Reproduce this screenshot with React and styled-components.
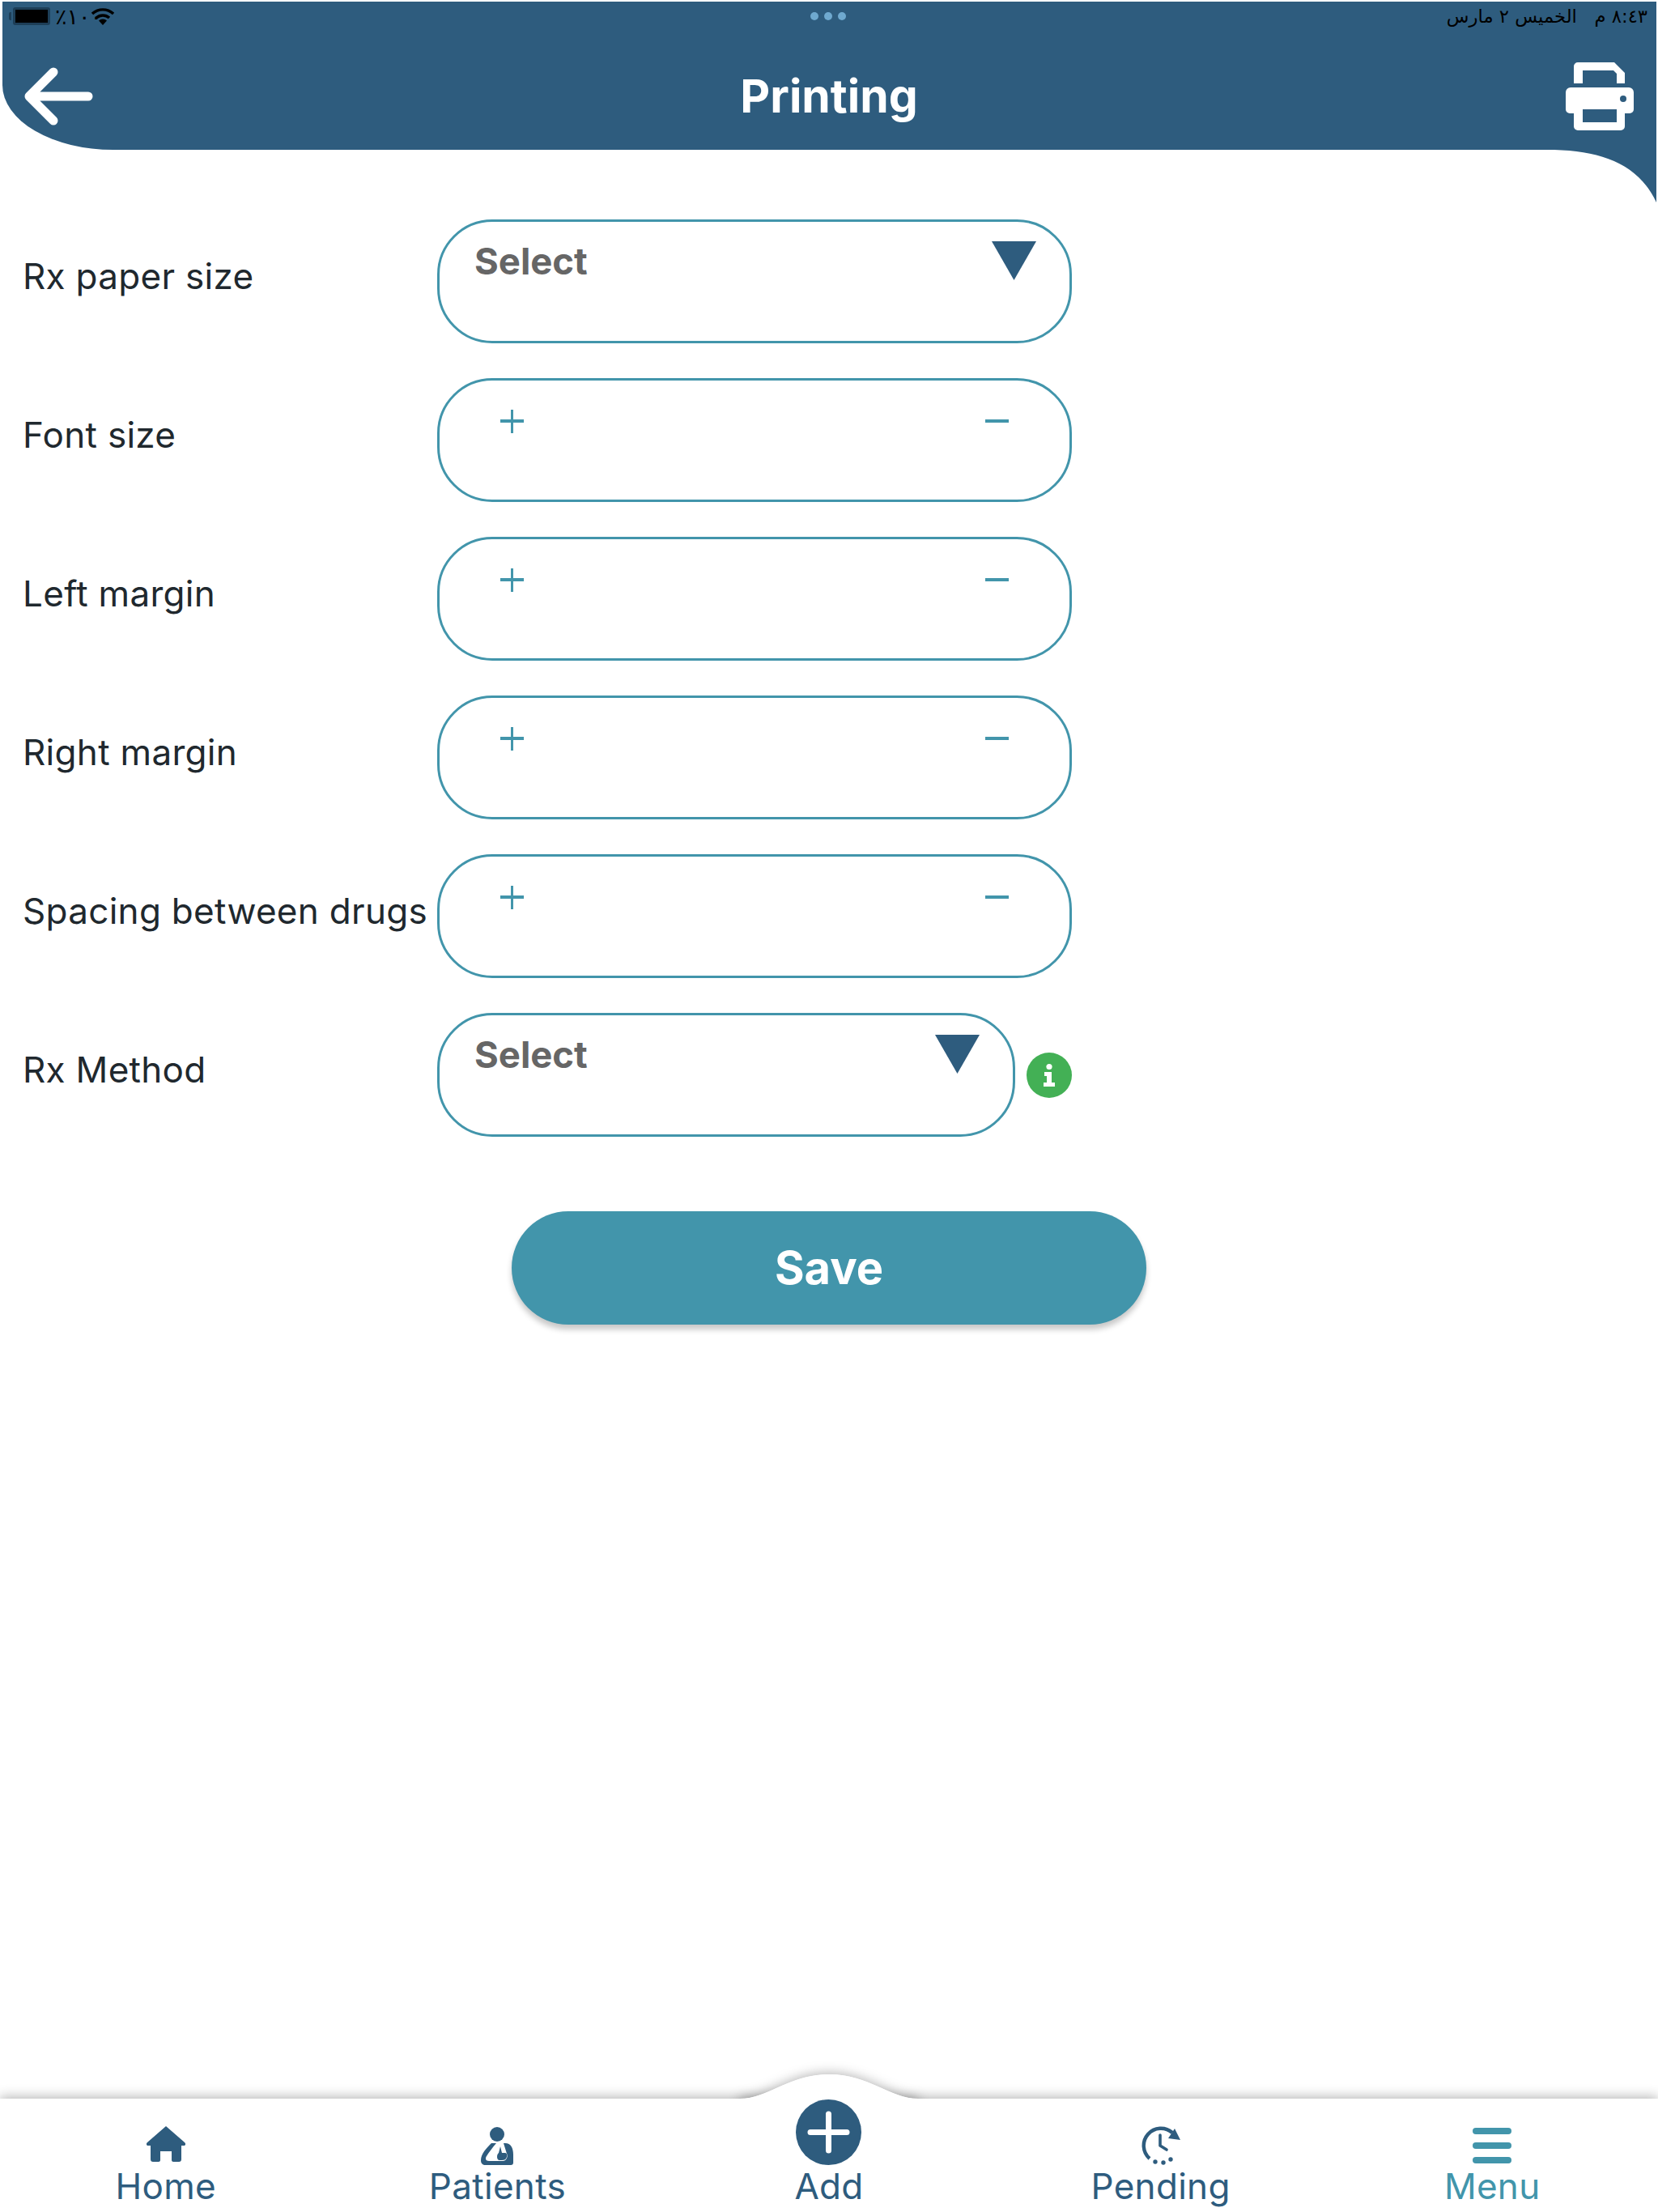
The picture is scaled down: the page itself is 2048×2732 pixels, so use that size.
import React from "react";
import styled, { createGlobalStyle } from "styled-components";

const navy = "#2e5c7e";
const teal = "#4295ab";

const rows = [
  { label: "Rx paper size", kind: "select" },
  { label: "Font size", kind: "stepper" },
  { label: "Left margin", kind: "stepper" },
  { label: "Right margin", kind: "stepper" },
  { label: "Spacing between drugs", kind: "stepper" },
  { label: "Rx Method", kind: "select", info: true },
];

const GlobalStyle = createGlobalStyle`
  html, body { margin: 0; padding: 0; background: #fff; }
  body { font-family: Inter, "Liberation Sans", sans-serif; }
`;

const Page = styled.div`
  width: 2048px;
  height: 2732px;
  display: flex;
  flex-direction: column;
  overflow: hidden;
  background: #fff;
`;

const Header = styled.header`
  position: relative;
  margin: 2px 2px 0 3px;
  height: 183px;
  background: ${navy};
  border-bottom-left-radius: 137px 80px;
  flex-shrink: 0;
`;

const StatusBar = styled.div`
  height: 36px;
  display: grid;
  grid-template-columns: 1fr auto 1fr;
  align-items: center;
  padding: 0 11px 0 7px;
  color: #000;
`;

const StatusLeft = styled.div`
  display: flex;
  align-items: center;
`;

const Battery = styled.div`
  position: relative;
  width: 40px;
  height: 16px;
  margin-left: 6px;
  background: #000;
  border-radius: 3px;
  border: 3px solid #1d3e57;
  &::before {
    content: "";
    position: absolute;
    left: -8px;
    top: 3px;
    width: 3px;
    height: 10px;
    background: #1d3e57;
    border-radius: 2px 0 0 2px;
  }
`;

const Percent = styled.span`
  font: 27px "DejaVu Sans", sans-serif;
  margin-left: 6px;
  width: 36px;
  white-space: nowrap;
`;

const Dots = styled.div`
  display: flex;
  gap: 7px;
`;

const Dot = styled.span`
  width: 10px;
  height: 10px;
  border-radius: 50%;
  background: #6fa9cf;
`;

const StatusTime = styled.div`
  direction: rtl;
  text-align: left;
  justify-self: end;
  font: 22.7px "DejaVu Sans", sans-serif;
  white-space: pre;
`;

const NavBar = styled.div`
  display: flex;
  align-items: center;
  justify-content: space-between;
  height: 133px;
  padding: 14px 28px 0 25px;
`;

const Title = styled.h1`
  margin: 0 0 0 -4px;
  font-size: 57px;
  font-weight: 700;
  color: #fff;
`;

const HeaderCorner = styled.svg`
  position: absolute;
  right: 0;
  top: 100%;
  display: block;
`;

const Form = styled.main`
  display: flex;
  flex-direction: column;
  gap: 43px;
  padding: 86px 0 0 28px;
`;

const Row = styled.div`
  display: flex;
  align-items: center;
`;

const Label = styled.label`
  width: 512px;
  padding-bottom: 14px;
  font-size: 44px;
  letter-spacing: 0.3px;
  color: #20282e;
  white-space: nowrap;
`;

const Field = styled.div`
  box-sizing: border-box;
  width: ${(p) => p.$width}px;
  height: 153px;
  display: flex;
  align-items: flex-start;
  justify-content: space-between;
  border: 3px solid ${teal};
  border-radius: 68px;
  background: #fff;
`;

const SelectField = styled(Field)`
  padding: 24px 41px 0 43px;
`;

const SelectText = styled.span`
  font-size: 45.5px;
  font-weight: 700;
  line-height: 50px;
  color: #666;
`;

const Caret = styled.span`
  width: 55px;
  height: 48px;
  background: ${navy};
  clip-path: polygon(0 0, 100% 0, 50% 100%);
`;

const StepperField = styled(Field)`
  padding: 36px 75px 0 75px;
`;

const StepButton = styled.span`
  position: relative;
  display: block;
  width: 29px;
  height: 29px;
  &::before {
    content: "";
    position: absolute;
    left: 0;
    right: 0;
    top: 12px;
    height: 4px;
    background: ${teal};
  }
  &::after {
    content: "";
    display: ${(p) => (p.$plus ? "block" : "none")};
    position: absolute;
    top: 0;
    bottom: 0;
    left: 13px;
    width: 3px;
    background: ${teal};
  }
`;

const InfoIcon = styled.svg`
  display: block;
  margin-left: 14px;
`;

const SaveButton = styled.button`
  align-self: flex-start;
  width: 784px;
  height: 140px;
  margin: 49px 0 0 604px;
  border: 0;
  border-radius: 70px;
  background: ${teal};
  box-shadow: 0 6px 7px rgba(0, 0, 0, 0.22);
  color: #fff;
  font-family: inherit;
  font-size: 56px;
  font-weight: 700;
  padding: 0;
`;

const TabBar = styled.nav`
  position: relative;
  margin-top: auto;
  height: 140px;
  display: grid;
  grid-template-columns: repeat(5, 1fr);
  background: #fff;
  box-shadow: 0 -2px 14px rgba(0, 0, 0, 0.3);
`;

const Hump = styled.svg`
  position: absolute;
  left: 50%;
  top: -30px;
  margin-left: -110px;
  display: block;
  filter: drop-shadow(0 -2px 7px rgba(0, 0, 0, 0.28));
  clip-path: inset(-30px -30px 30px -30px);
`;

const HumpFill = styled.svg`
  position: absolute;
  left: 50%;
  top: -30px;
  margin-left: -110px;
  display: block;
`;

const Tab = styled.div`
  position: relative;
  display: flex;
  flex-direction: column;
  align-items: center;
  color: ${(p) => (p.$active ? teal : navy)};
`;

const IconSlot = styled.div`
  height: 82px;
  display: flex;
  align-items: flex-end;
`;

const TabLabel = styled.span`
  font-size: 44px;
  line-height: 52px;
  letter-spacing: 0.3px;
`;

const MenuBars = styled.div`
  display: flex;
  flex-direction: column;
  gap: 10px;
  width: 48px;
  margin-bottom: 2px;
`;

const MenuBar = styled.span`
  height: 8px;
  border-radius: 4px;
  background: ${teal};
`;

const humpPath = "M0 30C35 30 60 0 110 0S185 30 220 30V60H0Z";

function BackArrow() {
  return (
    <svg width="90" height="76" viewBox="0 0 90 76" fill="none" stroke="#fff" strokeWidth="11" strokeLinecap="round" strokeLinejoin="round">
      <path d="M8 38H81M38 8 8 38l30 30" />
    </svg>
  );
}

function PrinterIcon() {
  return (
    <svg width="84" height="84" viewBox="0 0 84 84">
      <path fill="#fff" fillRule="evenodd" d="M15 0h45l13 13v13H63V14l-4-4H21v16H10V5a5 5 0 0 1 5-5Z" />
      <path fill="#fff" fillRule="evenodd" d="M6 31h72a6 6 0 0 1 6 6v21a5 5 0 0 1-5 5h-6v16a5 5 0 0 1-5 5H15a5 5 0 0 1-5-5V63H5a5 5 0 0 1-5-5V37a6 6 0 0 1 6-6Zm15 27v16h42V58Z" />
      <circle cx="71" cy="45" r="4" fill={navy} />
    </svg>
  );
}

function WifiIcon() {
  return (
    <svg width="28" height="21" viewBox="0 0 28 21" style={{ marginLeft: 9 }}>
      <path d="M1 7a19 19 0 0 1 26 0" fill="none" stroke="#000" strokeWidth="3.4" />
      <path d="M6 12a12 12 0 0 1 16 0" fill="none" stroke="#000" strokeWidth="3.4" />
      <path d="M9 15.5a7 7 0 0 1 10 0L14 21Z" fill="#000" />
    </svg>
  );
}

function InfoBadge() {
  return (
    <InfoIcon width="56" height="56" viewBox="0 0 56 56">
      <circle cx="28" cy="28" r="28" fill="#43b055" />
      <circle cx="28" cy="17.5" r="3.6" fill="#fff" />
      <path fill="#fff" d="M22 24h9v13h4v5H21v-5h4v-8h-3Z" />
    </InfoIcon>
  );
}

function HomeIcon() {
  return (
    <svg width="48" height="46" viewBox="0 0 48 46" style={{ marginBottom: 2 }}>
      <path fill={navy} d="M24 0 47 20c2 2 1 4-1 4h-3v17c0 2-1 3-3 3h-7c-1 0-2-1-2-2V31H17v11c0 1-1 2-2 2H8c-2 0-3-1-3-3V24H2c-2 0-3-2-1-4Z" />
    </svg>
  );
}

function PatientsIcon() {
  return (
    <svg width="40" height="47" viewBox="0 0 40 47">
      <circle cx="20" cy="9" r="9" fill={navy} />
      <path fill={navy} d="M13 20C7 26 0 33 0 41c0 4 2 6 6 6h31c2 0 3-1 3-3V34c0-8-3-14-10-14h-2l4 13c2 2 0 9-5 9H10c-4 0-5-3-3-6 3-5 7-10 12-16Z" />
      <path fill={navy} d="M24 24 26 32h3c3 0 4 2 3 5s-3 4-6 4h-3c-2 0-3-2-3-4 0-3 1-4 2-5Z" />
    </svg>
  );
}

function AddIcon() {
  return (
    <svg width="81" height="81" viewBox="0 0 81 81" style={{ position: "relative" }}>
      <circle cx="40.5" cy="40.5" r="40.5" fill={navy} />
      <path d="M40.5 18v45M18 40.5h45" stroke="#fff" strokeWidth="7" strokeLinecap="round" />
    </svg>
  );
}

function PendingIcon() {
  return (
    <svg width="48" height="48" viewBox="0 0 48 48" fill="none">
      <path d="M10 40A21 21 0 0 1 38 8" stroke={navy} strokeWidth="4.4" />
      <path d="M33 15 41 3l7 14Z" fill={navy} />
      <path d="M23 11v13l8 5" stroke={navy} strokeWidth="3.6" strokeLinecap="round" strokeLinejoin="round" />
      <circle cx="17" cy="44" r="2.7" fill={navy} />
      <circle cx="27" cy="45" r="2.7" fill={navy} />
      <circle cx="36" cy="41" r="2.7" fill={navy} />
    </svg>
  );
}

export default function App() {
  return (
    <Page>
      <GlobalStyle />
      <Header>
        <StatusBar>
          <StatusLeft>
            <Battery />
            <Percent>٪١٠٠</Percent>
            <WifiIcon />
          </StatusLeft>
          <Dots>
            <Dot />
            <Dot />
            <Dot />
          </Dots>
          <StatusTime>{"٨:٤٣ م   الخميس ٢ مارس"}</StatusTime>
        </StatusBar>
        <NavBar>
          <BackArrow />
          <Title>Printing</Title>
          <PrinterIcon />
        </NavBar>
        <HeaderCorner width="126" height="65" viewBox="0 0 126 65">
          <path fill={navy} d="M0 0C60 2 104 18 126 65V0Z" />
        </HeaderCorner>
      </Header>

      <Form>
        {rows.map((row) => (
          <Row key={row.label}>
            <Label>{row.label}</Label>
            {row.kind === "select" ? (
              <SelectField $width={row.info ? 714 : 784}>
                <SelectText>Select</SelectText>
                <Caret />
              </SelectField>
            ) : (
              <StepperField $width={784}>
                <StepButton $plus />
                <StepButton />
              </StepperField>
            )}
            {row.info && <InfoBadge />}
          </Row>
        ))}
        <SaveButton>Save</SaveButton>
      </Form>

      <TabBar>
        <Hump width="220" height="60" viewBox="0 0 220 60">
          <path fill="#fff" d={humpPath} />
        </Hump>
        <HumpFill width="220" height="60" viewBox="0 0 220 60">
          <path fill="#fff" d={humpPath} />
        </HumpFill>
        <Tab>
          <IconSlot><HomeIcon /></IconSlot>
          <TabLabel>Home</TabLabel>
        </Tab>
        <Tab>
          <IconSlot><PatientsIcon /></IconSlot>
          <TabLabel>Patients</TabLabel>
        </Tab>
        <Tab>
          <IconSlot><AddIcon /></IconSlot>
          <TabLabel>Add</TabLabel>
        </Tab>
        <Tab>
          <IconSlot><PendingIcon /></IconSlot>
          <TabLabel>Pending</TabLabel>
        </Tab>
        <Tab $active>
          <IconSlot>
            <MenuBars>
              <MenuBar />
              <MenuBar />
              <MenuBar />
            </MenuBars>
          </IconSlot>
          <TabLabel>Menu</TabLabel>
        </Tab>
      </TabBar>
    </Page>
  );
}
